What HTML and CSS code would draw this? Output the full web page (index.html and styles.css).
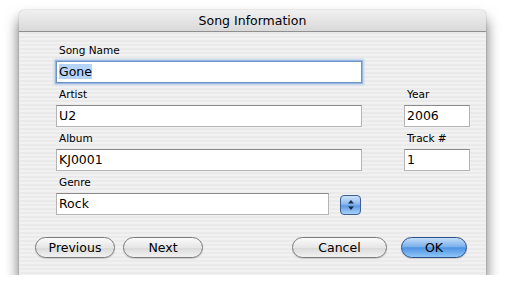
FILE: index.html
```html
<!DOCTYPE html>
<html lang="en">
<head>
    <meta charset="UTF-8">
    <title>Song Information</title>
    <link rel="stylesheet" href="styles.css">
</head>
<body>
    <div class="window">
        <div class="titlebar">Song Information</div>
        <div class="content">
            <div class="fields">
                <label class="field-label">Song Name</label>
                <div></div>
                <div class="textbox focused"><span class="selected">Gone</span></div>
                <div></div>

                <label class="field-label">Artist</label>
                <label class="field-label">Year</label>
                <div class="textbox">U2</div>
                <div class="textbox">2006</div>

                <label class="field-label">Album</label>
                <label class="field-label">Track #</label>
                <div class="textbox">KJ0001</div>
                <div class="textbox">1</div>

                <label class="field-label">Genre</label>
                <div></div>
                <div class="genre-row">
                    <div class="textbox genre">Rock</div>
                    <div class="stepper">
                        <svg width="8" height="12" viewBox="0 0 8 12">
                            <path d="M4 1 L7 4.5 L1 4.5 Z" fill="#1a2b4a"/>
                            <path d="M4 11 L7 7.5 L1 7.5 Z" fill="#1a2b4a"/>
                        </svg>
                    </div>
                </div>
                <div></div>
            </div>

            <div class="buttons">
                <div class="left-buttons">
                    <button class="btn btn-prev">Previous</button>
                    <button class="btn btn-next">Next</button>
                </div>
                <div class="right-buttons">
                    <button class="btn btn-cancel">Cancel</button>
                    <button class="btn btn-ok">OK</button>
                </div>
            </div>
        </div>
    </div>
</body>
</html>
```

FILE: styles.css
```css
body {
    margin: 0;
    padding: 10px 0 0 19px;
    background-color: #fff;
    font-family: "DejaVu Sans", Verdana, sans-serif;
}

.window {
    width: 467px;
    height: 265px;
    border-radius: 5px 5px 0 0;
    background-color: #ececec;
    background-image: repeating-linear-gradient(to bottom, #f1f1f1 0, #f1f1f1 2px, #eaeaea 2px, #eaeaea 4px);
    box-shadow: 0 9px 14px rgba(0, 0, 0, 0.6), 0 0 1px rgba(0, 0, 0, 0.5);
    overflow: hidden;
}

.titlebar {
    height: 21px;
    line-height: 21px;
    text-align: center;
    font-size: 12.5px;
    color: #000;
    background: linear-gradient(to bottom, #f0f0f0, #d9d9d9);
    border-bottom: 1px solid #8f8f8f;
}

.content {
    padding: 7px 19px 17px 16px;
}

.fields {
    display: grid;
    grid-template-columns: 306px 66px;
    grid-auto-rows: 22px;
    column-gap: 42px;
    margin-left: 21px;
}

.field-label {
    font-size: 10.5px;
    color: #000;
    line-height: 22px;
    padding-left: 3px;
}

.textbox {
    box-sizing: border-box;
    height: 22px;
    background: #fff;
    border: 1px solid #b4b4b4;
    border-top-color: #888;
    font-size: 12.5px;
    line-height: 20px;
    padding-left: 2px;
    color: #000;
}

.textbox.focused {
    border-color: #6f93c6;
    box-shadow: 0 0 0 1px #98b6de, 0 0 2px 2px #bcd1ee;
}

.selected {
    background-color: #b5d4fc;
}

.genre-row {
    display: flex;
    align-items: center;
}

.textbox.genre {
    width: 273px;
}

.stepper {
    box-sizing: border-box;
    width: 21px;
    height: 20px;
    margin-left: 11px;
    margin-top: 2px;
    border-radius: 4px;
    border: 1px solid #3c5f96;
    background: linear-gradient(to bottom, #cfe3fb 0%, #8ab8ee 45%, #5d9ae2 55%, #a9d2fb 100%);
    display: flex;
    align-items: center;
    justify-content: center;
}

.buttons {
    display: flex;
    justify-content: space-between;
    margin-top: 22px;
}

.left-buttons,
.right-buttons {
    display: flex;
    gap: 8px;
}

.right-buttons {
    gap: 14px;
}

.btn {
    box-sizing: border-box;
    height: 21px;
    border-radius: 11px;
    border: 1px solid #7a7a7a;
    background: linear-gradient(to bottom, #fbfbfb 0%, #e6e6e6 50%, #d9d9d9 52%, #f2f2f2 100%);
    font-family: "DejaVu Sans", Verdana, sans-serif;
    font-size: 12.5px;
    color: #000;
    padding: 0;
    box-shadow: 0 1px 1px rgba(0, 0, 0, 0.15);
}

.btn-prev,
.btn-next {
    width: 80px;
}

.btn-cancel {
    width: 95px;
}

.btn-ok {
    width: 66px;
    border-color: #2a4f8a;
    background: linear-gradient(to bottom, #c6ddf8 0%, #7cb1ec 45%, #4e93e3 52%, #8fc6f8 100%);
}
```
